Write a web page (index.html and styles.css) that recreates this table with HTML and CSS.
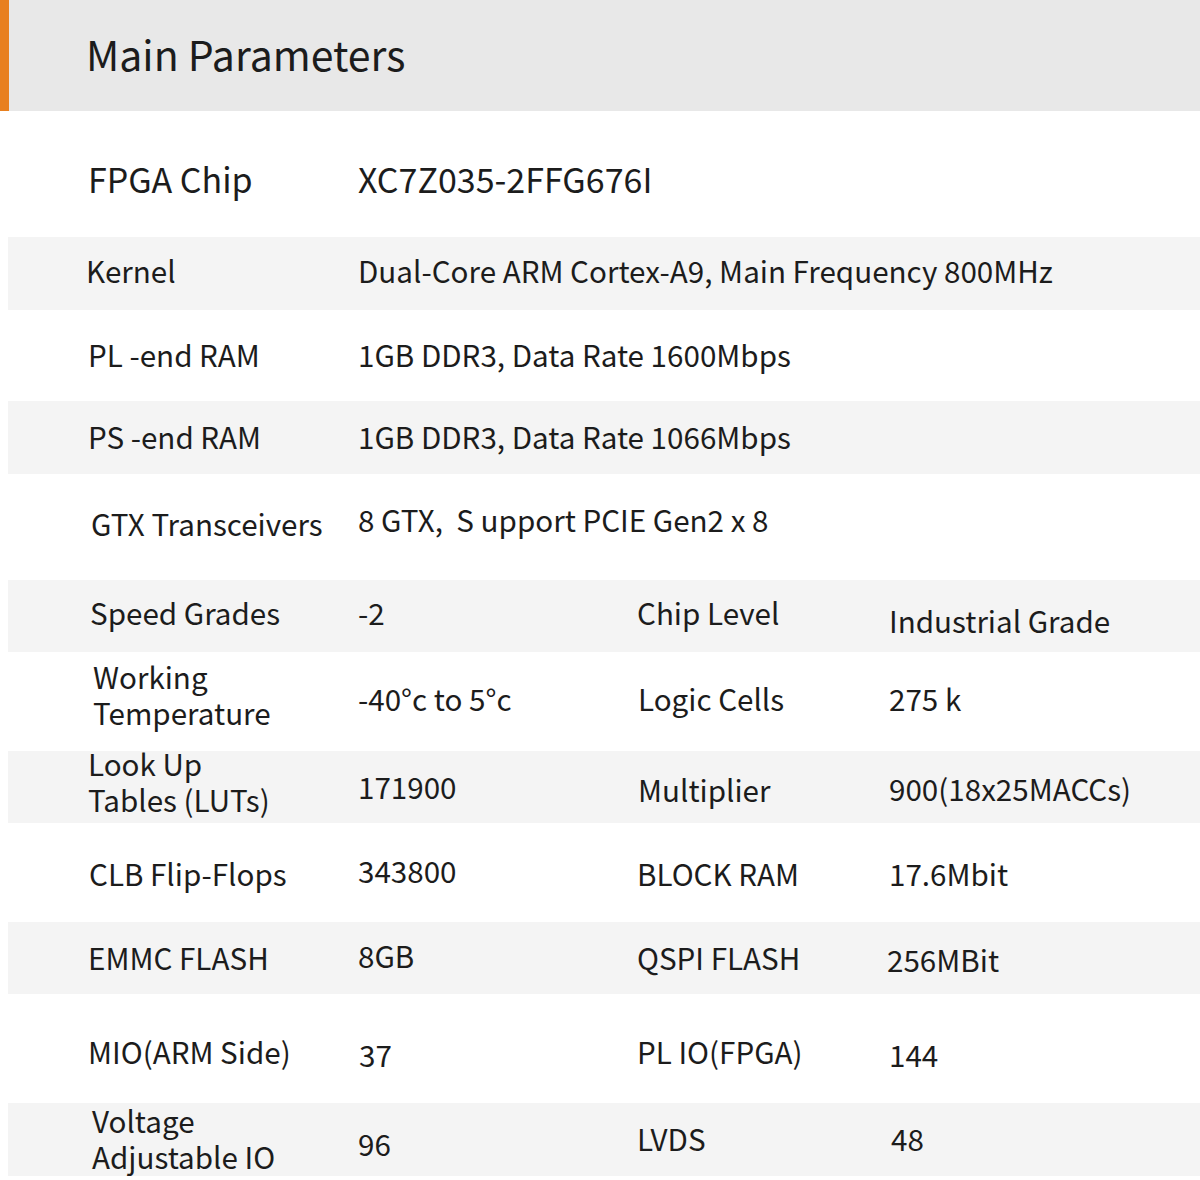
FILE: index.html
```html
<!DOCTYPE html>
<html lang="en">
<head>
<meta charset="utf-8">
<title>Main Parameters</title>
<link rel="stylesheet" href="styles.css">
</head>
<body>
<div class="page">
  <header class="head"><h1 class="title">Main Parameters</h1></header>
  <div class="table">
    <div class="row white h126 big dn6">
      <div class="lab">FPGA Chip</div>
      <div class="val span">XC7Z035-2FFG676I</div>
    </div>
    <div class="row gray h73">
      <div class="lab l-2">Kernel</div>
      <div class="val span">Dual-Core ARM Cortex-A9, Main Frequency 800MHz</div>
    </div>
    <div class="row white h91 dn2">
      <div class="lab">PL -end RAM</div>
      <div class="val span">1GB DDR3, Data Rate 1600Mbps</div>
    </div>
    <div class="row gray h73 dn2">
      <div class="lab">PS -end RAM</div>
      <div class="val span">1GB DDR3, Data Rate 1066Mbps</div>
    </div>
    <div class="row white h106">
      <div class="lab l3">GTX Transceivers</div>
      <div class="val span up4">8 GTX,&nbsp; S upport PCIE Gen2 x 8</div>
    </div>
    <div class="row gray h72">
      <div class="lab l2">Speed Grades</div>
      <div class="val">-2</div>
      <div class="lab2">Chip Level</div>
      <div class="val2 dn8">Industrial Grade</div>
    </div>
    <div class="row white h99">
      <div class="lab l5 two up4">Working<br>Temperature</div>
      <div class="val">-40°c to 5°c</div>
      <div class="lab2 l1">Logic Cells</div>
      <div class="val2">275 k</div>
    </div>
    <div class="row gray h72">
      <div class="lab two up5">Look Up<br>Tables (LUTs)</div>
      <div class="val">171900</div>
      <div class="lab2 l1 dn3">Multiplier</div>
      <div class="val2 dn2">900(18x25MACCs)</div>
    </div>
    <div class="row white h99 dn4">
      <div class="lab l1">CLB Flip-Flops</div>
      <div class="val up3">343800</div>
      <div class="lab2">BLOCK RAM</div>
      <div class="val2">17.6Mbit</div>
    </div>
    <div class="row gray h72 dn3">
      <div class="lab">EMMC FLASH</div>
      <div class="val up2">8GB</div>
      <div class="lab2">QSPI FLASH</div>
      <div class="val2 l-2 dn2">256MBit</div>
    </div>
    <div class="row white h109 dn6">
      <div class="lab">MIO(ARM Side)</div>
      <div class="val l1 dn3">37</div>
      <div class="lab2">PL IO(FPGA)</div>
      <div class="val2 dn3">144</div>
    </div>
    <div class="row gray h73">
      <div class="lab l4 two">Voltage<br>Adjustable IO</div>
      <div class="val dn5">96</div>
      <div class="lab2">LVDS</div>
      <div class="val2 l2">48</div>
    </div>
  </div>
</div>
</body>
</html>
```

FILE: styles.css
```css
html, body {
  margin: 0;
  padding: 0;
  background: #ffffff;
}

body {
  font-family: "Noto Sans CJK SC", "Noto Sans", sans-serif;
  color: #1c1c1c;
  width: 1200px;
  height: 1180px;
  overflow: hidden;
}

.head {
  height: 111px;
  background: #e8e8e8;
  border-left: 9px solid #e8801f;
  box-sizing: border-box;
  display: flex;
  align-items: center;
  padding-left: 77px;
  padding-bottom: 4px;
}

.title {
  margin: 0;
  font-size: 41px;
  font-weight: 400;
  line-height: 1;
}

.table {
  display: flex;
  flex-direction: column;
}

.row {
  display: grid;
  grid-template-columns: 270px 279px 252px 1fr;
  align-items: center;
  margin-left: 8px;
  padding-left: 80px;
  padding-bottom: 6px;
  font-size: 29.6px;
  line-height: 36px;
  box-sizing: border-box;
}

.row.big {
  font-size: 34px;
  line-height: 40px;
  padding-bottom: 2px;
}

.white { background: #ffffff; }
.gray { background: #f4f4f4; }

.h126 { height: 126px; }
.h106 { height: 106px; }
.h109 { height: 109px; }
.h99 { height: 99px; }
.h91 { height: 91px; }
.h73 { height: 73px; }
.h72 { height: 72px; }

.span { grid-column: 2 / 5; }

.lab, .val, .lab2, .val2 {
  position: relative;
  white-space: nowrap;
}

.two { white-space: normal; }

/* small nudges matching the loose placement of the source image */
.dn2 > *, .dn2.lab, .dn2.val, .dn2.lab2, .dn2.val2 { top: 2px; }
.dn3 > *, .dn3.lab, .dn3.val, .dn3.lab2, .dn3.val2 { top: 3px; }
.dn4 > *, .dn4.lab, .dn4.val, .dn4.lab2, .dn4.val2 { top: 4px; }
.dn6 > *, .dn6.lab, .dn6.val, .dn6.lab2, .dn6.val2 { top: 6px; }
.dn5.val { top: 5px; }
.dn8.val2 { top: 8px; }
.up2.val { top: -2px; }
.up3.val { top: -3px; }
.up4.lab { top: -4px; }
.up4.val { top: -4px; }
.up5.lab { top: -5px; }

.row.dn3 .val.up2 { top: 1px; }
.row.dn3 .val2.dn2 { top: 5px; }
.row.dn4 .val.up3 { top: 1px; }
.row.dn6 .val.dn3,
.row.dn6 .val2.dn3 { top: 9px; }

.l-2 { left: -2px; }
.l1 { left: 1px; }
.l2 { left: 2px; }
.l3 { left: 3px; }
.l4 { left: 4px; }
.l5 { left: 5px; }
```
